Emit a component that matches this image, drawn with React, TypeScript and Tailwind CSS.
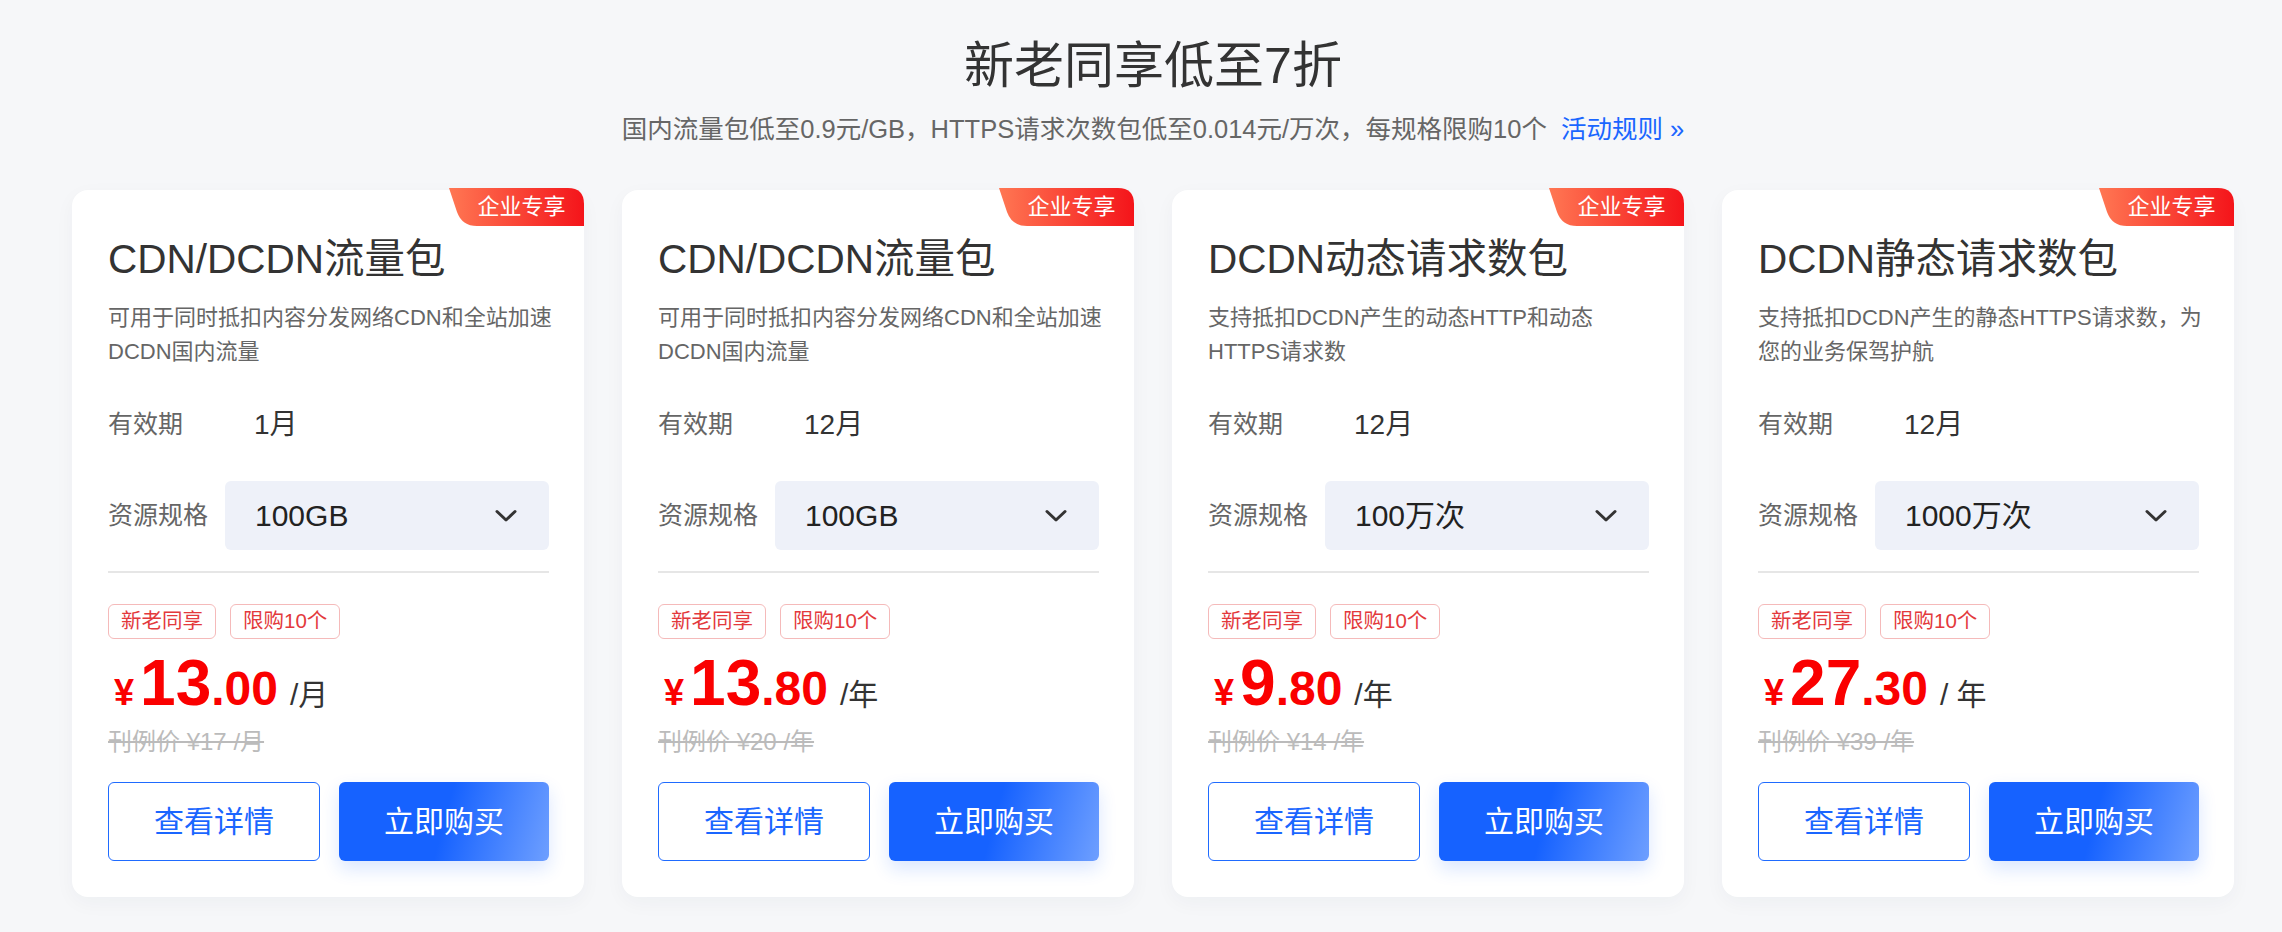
import React from "react"

type Pack = {
  title: string
  desc: string[]
  period: string
  spec: string
  int: string
  dec: string
  unit: string
  list: string
}

const packs: Pack[] = [
  {
    title: "CDN/DCDN流量包",
    desc: ["可用于同时抵扣内容分发网络CDN和全站加速", "DCDN国内流量"],
    period: "1月",
    spec: "100GB",
    int: "13",
    dec: ".00",
    unit: "/月",
    list: "刊例价 ¥17 /月",
  },
  {
    title: "CDN/DCDN流量包",
    desc: ["可用于同时抵扣内容分发网络CDN和全站加速", "DCDN国内流量"],
    period: "12月",
    spec: "100GB",
    int: "13",
    dec: ".80",
    unit: "/年",
    list: "刊例价 ¥20 /年",
  },
  {
    title: "DCDN动态请求数包",
    desc: ["支持抵扣DCDN产生的动态HTTP和动态", "HTTPS请求数"],
    period: "12月",
    spec: "100万次",
    int: "9",
    dec: ".80",
    unit: "/年",
    list: "刊例价 ¥14 /年",
  },
  {
    title: "DCDN静态请求数包",
    desc: ["支持抵扣DCDN产生的静态HTTPS请求数，为", "您的业务保驾护航"],
    period: "12月",
    spec: "1000万次",
    int: "27",
    dec: ".30",
    unit: "/ 年",
    list: "刊例价 ¥39 /年",
  },
]

function Badge() {
  return (
    <div className="absolute -top-[2px] right-0 w-[135px] h-[38px]">
      <svg width="135" height="38" viewBox="0 0 135 38" className="absolute inset-0">
        <defs>
          <linearGradient id="badgeGrad" x1="0" y1="0" x2="1" y2="0">
            <stop offset="0" stopColor="#ff7753" />
            <stop offset="1" stopColor="#f4141a" />
          </linearGradient>
        </defs>
        <path d="M0 0 H119 Q135 0 135 16 V38 H28 Q13 38 8 24 Z" fill="url(#badgeGrad)" />
      </svg>
      <span className="relative flex h-full items-center justify-center pl-[10px] text-[22px] leading-none text-white">
        企业专享
      </span>
    </div>
  )
}

function Card({ pack }: { pack: Pack }) {
  return (
    <div className="relative w-[512px] rounded-[16px] bg-white pl-[36px] pr-[35px] pt-[45px] pb-[36px] shadow-[0_6px_20px_rgba(30,40,80,0.04)]">
      <Badge />

      <h2 className="text-[40.5px] leading-[48px] text-[#333]">{pack.title}</h2>

      <div className="mt-[18px] text-[22px] leading-[34px] text-[#666]">
        {pack.desc.map((line, idx) => (
          <p key={idx} className="whitespace-nowrap">{line}</p>
        ))}
      </div>

      {/* validity */}
      <div className="mt-[39px] flex h-[34px] items-center">
        <span className="w-[117px] text-[25px] text-[#666]">有效期</span>
        <span className="pl-[29px] text-[28px] text-[#333]">{pack.period}</span>
      </div>

      {/* spec select */}
      <div className="mt-[39px] flex items-center">
        <span className="w-[117px] text-[25px] text-[#666]">资源规格</span>
        <div className="flex h-[69px] flex-1 items-center justify-between rounded-[6px] bg-[#eef1f9] pl-[30px] pr-[32px]">
          <span className="text-[30px] text-[#222]">{pack.spec}</span>
          <svg width="22" height="14" viewBox="0 0 22 14">
            <path d="M2 2.5 L11 11 L20 2.5" fill="none" stroke="#333" strokeWidth="3" strokeLinecap="round" strokeLinejoin="round" />
          </svg>
        </div>
      </div>

      <div className="mt-[21px] h-[2px] bg-[#e6e6e6]" />

      <div className="mt-[31px] flex gap-[14px]">
        <span className="flex h-[35px] items-center rounded-[6px] border border-[#f5baba] px-[12px] text-[20.5px] text-[#e3393c]">新老同享</span>
        <span className="flex h-[35px] items-center rounded-[6px] border border-[#f5baba] px-[12px] text-[20.5px] text-[#e3393c]">限购10个</span>
      </div>

      <div className="mt-[12px] flex items-baseline leading-none">
        <span className="ml-[6px] mr-[6px] text-[36px] font-bold text-[#fa0000]">¥</span>
        <span className="text-[64px] font-bold text-[#fa0000]">{pack.int}</span>
        <span className="text-[48px] font-bold text-[#fa0000]">{pack.dec}</span>
        <span className="ml-[12px] text-[30px] text-[#333]">{pack.unit}</span>
      </div>

      <p className="mt-[12px] text-[24px] leading-[30px] text-[#bbb] line-through">{pack.list}</p>

      <div className="mt-[25px] flex gap-[19px]">
        <button className="flex h-[79px] w-[212px] items-center justify-center rounded-[6px] border-[1.5px] border-[#1f6bff] bg-white text-[30px] text-[#1a66ff]">
          查看详情
        </button>
        <button className="flex h-[79px] flex-1 items-center justify-center rounded-[6px] bg-[linear-gradient(105deg,#1662ff_50%,#6e9fff_100%)] text-[30px] text-white shadow-[0_8px_18px_rgba(22,98,255,0.16)]">
          立即购买
        </button>
      </div>
    </div>
  )
}

export default function App() {
  return (
    <div className="min-h-[932px] bg-[#f6f7f9] pt-[36px] font-['Liberation_Sans','Noto_Sans_CJK_SC',sans-serif]">
      <div className="flex flex-col items-center pl-[24px]">
        <h1 className="text-[50px] leading-[60px] text-[#333]">新老同享低至7折</h1>
        <p className="mt-[17px] flex items-center text-[25.5px] leading-[32px] text-[#666]">
          国内流量包低至0.9元/GB，HTTPS请求次数包低至0.014元/万次，每规格限购10个
          <a className="ml-[14px] text-[#1a66ff]">活动规则 »</a>
        </p>

        <div className="mt-[45px] flex gap-[38px]">
          {packs.map((pack, idx) => (
            <Card key={idx} pack={pack} />
          ))}
        </div>
      </div>
    </div>
  )
}
